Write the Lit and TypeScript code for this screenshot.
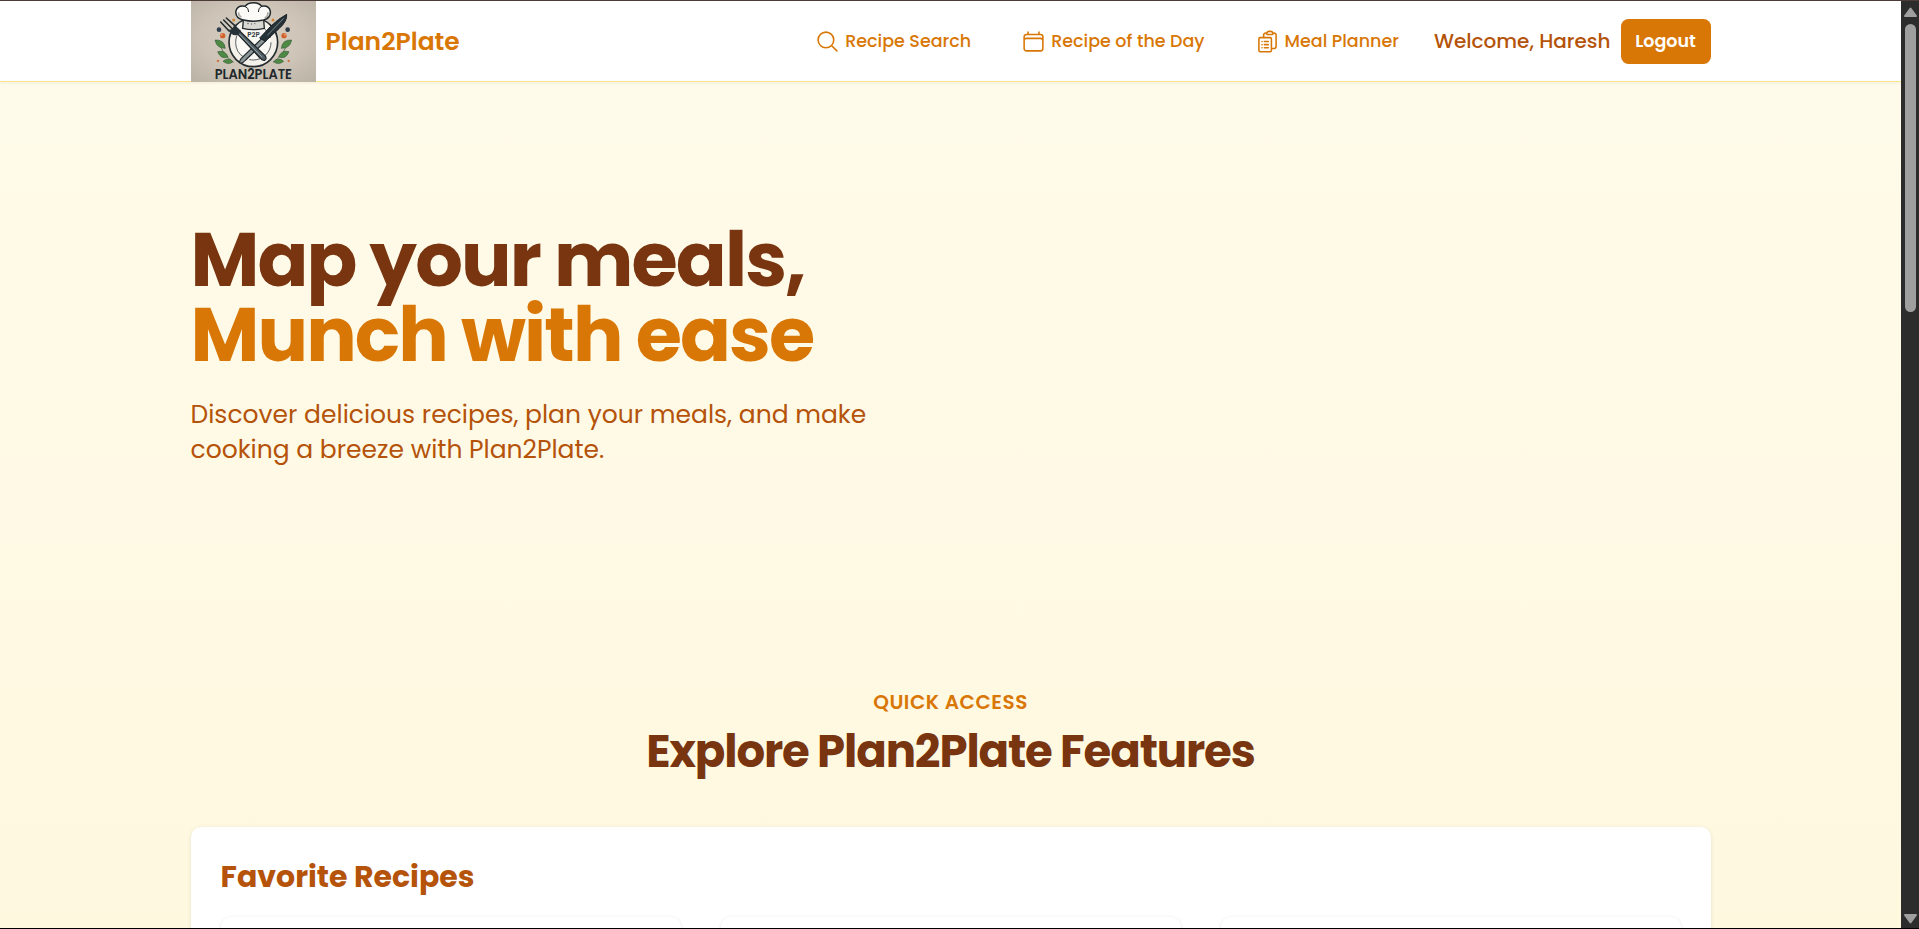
import { LitElement, html, css, svg } from "lit";
import { customElement } from "lit/decorators.js";

const NAV = [
  {
    label: "Recipe Search",
    path: "M21 21l-5.197-5.197m0 0A7.5 7.5 0 105.196 5.196a7.5 7.5 0 0010.607 10.607z",
  },
  {
    label: "Recipe of the Day",
    path: "M6.75 3v2.25M17.25 3v2.25M3 18.75V7.5a2.25 2.25 0 012.25-2.25h13.5A2.25 2.25 0 0121 7.5v11.25m-18 0A2.25 2.25 0 005.25 21h13.5A2.25 2.25 0 0021 18.75m-18 0v-7.5A2.25 2.25 0 015.25 9h13.5A2.25 2.25 0 0121 11.25v7.5",
  },
  {
    label: "Meal Planner",
    path: "M9 12h3.75M9 15h3.75M9 18h3.75m3 .75H18a2.25 2.25 0 002.25-2.25V6.108c0-1.135-.845-2.098-1.976-2.192a48.424 48.424 0 00-1.123-.08m-5.801 0c-.065.21-.1.433-.1.664 0 .414.336.75.75.75h4.5a.75.75 0 00.75-.75 2.25 2.25 0 00-.1-.664m-5.8 0A2.251 2.251 0 0113.5 2.25H15c1.012 0 1.867.668 2.15 1.586m-5.8 0c-.376.023-.75.05-1.124.08C9.095 4.01 8.25 4.973 8.25 6.108V8.25m0 0H4.875c-.621 0-1.125.504-1.125 1.125v11.25c0 .621.504 1.125 1.125 1.125h9.75c.621 0 1.125-.504 1.125-1.125V9.375c0-.621-.504-1.125-1.125-1.125H8.25zM6.75 12h.008v.008H6.75V12zm0 3h.008v.008H6.75V15zm0 3h.008v.008H6.75V18z",
  },
];

/* One leafy sprig; the other side of the plate is its mirror image. */
const sprig = svg`
  <path d="M85 122Q92 160 128 184" fill="none" stroke="#3c5a3a" stroke-width="2"/>
  <g fill="#4f8a45" stroke="#2b4a30" stroke-width="1.5">
    <path d="M72 117Q100 115 103 142Q77 143 72 117Z"/>
    <path d="M80 152Q103 146 111 168Q89 176 80 152Z"/>
    <path d="M96 181Q112 166 126 182Q112 194 96 181Z"/>
  </g>
  <circle cx="84" cy="86" r="7" fill="#2e3d4c"/>
  <circle cx="95" cy="104" r="8" fill="#d2622c"/>
  <circle cx="92" cy="101" r="3" fill="#eb9a6c"/>
  <circle cx="128" cy="57" r="4.5" fill="#d08435"/>
  <circle cx="81" cy="180" r="3.5" fill="#d0703a"/>`;

@customElement("plate-logo")
export class PlateLogo extends LitElement {
  static styles = css`
    :host { display: block; width: 125px; height: 81px; }
    svg { display: block; width: 100%; height: 100%; }
    .word { font: 600 41px Poppins, Lato, sans-serif; fill: #20282c; }
    .mono { font: 600 18px Poppins, Lato, sans-serif; fill: #343a3d; }
  `;
  render() {
    return html`<svg viewBox="0 0 375 243" preserveAspectRatio="none">
      <defs>
        <radialGradient id="bg" cx="50%" cy="45%" r="70%">
          <stop offset="0" stop-color="#d9d1c4" />
          <stop offset="0.6" stop-color="#cdc4b7" />
          <stop offset="1" stop-color="#bdb4a8" />
        </radialGradient>
      </defs>
      <rect width="375" height="243" fill="url(#bg)" />
      <circle cx="187" cy="124" r="73" fill="#f4f1eb" stroke="#262d30" stroke-width="5" />
      <circle cx="187" cy="124" r="53" fill="#fbf9f5" stroke="#3b4144" stroke-width="2.5" stroke-dasharray="95 16" />
      ${sprig}
      <g transform="translate(374 0) scale(-1 1)">${sprig}</g>
      <text class="mono" x="169" y="108" textLength="37" lengthAdjust="spacingAndGlyphs">P2P</text>
      <g transform="translate(0 2)">
        <path d="M157 54L155 80Q187 88 220 80L218 54Z" fill="#d9d7d2" stroke="#22292c" stroke-width="4" />
        <path d="M157 55Q131 49 135 27Q141 10 162 14Q170 3 187 3Q205 3 212 14Q234 10 238 29Q240 49 218 55Q187 62 157 55Z"
          fill="#fbfaf7" stroke="#22292c" stroke-width="4.5" />
        <path d="M162 14Q173 18 173 31M212 14Q202 18 202 31" fill="none" stroke="#22292c" stroke-width="3" />
        <path d="M221 49Q233 43 230 32M151 46Q141 41 143 32" fill="none" stroke="#aaa9a5" stroke-width="5" />
        <path d="M169 66h4M180 67h3M190 66h3" stroke="#4c5153" stroke-width="3" />
      </g>
      <path d="M213 112L151 172Q142 184 148 186Q156 187 164 177L225 119Z" fill="#8c9696" stroke="#20282c" stroke-width="3.5" />
      <path d="M287 40Q289 61 264 83L223 121L206 111L239 76Q262 53 287 40Z" fill="#263238" stroke="#192125" stroke-width="3" />
      <path d="M278 52L229 103" stroke="#77868a" stroke-width="3" />
      <path d="M136 95L144 88L222 164Q229 174 221 178Q213 179 207 171Z" fill="#536167" stroke="#182024" stroke-width="3.5" />
      <path d="M145 99L213 168" stroke="#98a4a7" stroke-width="3" />
      <g fill="none" stroke="#20282c" stroke-width="4.5" stroke-linecap="round">
        <path d="M89 63L114 90M98 57L124 83M106 51L134 76" />
      </g>
      <path d="M109 85Q128 90 129 70L140 80Q151 88 145 97Q134 108 121 98Z" fill="#263238" />
      <text class="word" x="71" y="233" textLength="232" lengthAdjust="spacingAndGlyphs">PLAN2PLATE</text>
    </svg>`;
  }
}

@customElement("app-root")
export class AppRoot extends LitElement {
  static styles = css`
    * { box-sizing: border-box; margin: 0; }
    :host {
      display: grid;
      grid-template-columns: minmax(0, 1fr) 18px;
      position: relative;
      height: 929px;
      overflow: hidden;
      font-family: Poppins, "Open Sans", sans-serif;
      color: #78350f;
    }
    .edge-top, .edge-bottom { position: absolute; left: 0; right: 0; height: 1px; }
    .edge-top { top: 0; background: #4b3c38; }
    .edge-bottom { bottom: 0; background: #000; }
    .page {
      height: 929px;
      overflow: hidden;
      background: linear-gradient(#fffbeb, #fef3c7) 0 0 / 100% 2870px no-repeat;
    }
    .wrap { width: 1520px; margin: 0 auto; }
    header {
      padding-top: 1px;
      height: 82px;
      background: #fff;
      border-bottom: 1px solid #fde68a;
      box-shadow: 0 1px 3px rgba(0, 0, 0, 0.06);
    }
    .bar { display: flex; align-items: center; height: 80px; }
    .brand { display: flex; align-items: center; gap: 10px; margin-right: auto; height: 80px; }
    plate-logo { align-self: flex-start; }
    .name { font-size: 25px; line-height: 35px; font-weight: 600; color: #d97706; }
    nav { display: flex; gap: 50px; margin-right: 35px; }
    .link {
      display: flex; align-items: center; gap: 5px;
      font-size: 17.5px; line-height: 25px; font-weight: 500; color: #d97706;
    }
    .link svg { width: 25px; height: 25px; fill: none; stroke: currentColor; stroke-width: 1.5; stroke-linecap: round; stroke-linejoin: round; }
    .hello { margin-right: 10px; font-size: 20px; line-height: 30px; font-weight: 500; color: #b45309; }
    button {
      width: 90px; height: 45px; padding: 0; border: 0; border-radius: 7.5px; background: #d97706; color: #fff;
      font: 600 17.5px/25px Poppins, "Open Sans", sans-serif;
    }
    .hero { padding-top: 140px; height: 604.5px; }
    h1 { font-size: 75px; line-height: 75px; font-weight: 700; letter-spacing: -0.025em; }
    h1 span { display: block; }
    .accent { color: #d97706; }
    .lead { margin-top: 25px; width: 710px; font-size: 25px; line-height: 35px; color: #b45309; }
    .intro { text-align: center; }
    .eyebrow { font-size: 20px; line-height: 30px; font-weight: 600; letter-spacing: 0.025em; color: #d97706; }
    h2 { margin-top: 10px; font-size: 45px; line-height: 50px; font-weight: 700; letter-spacing: -0.025em; }
    .card {
      margin-top: 50px; padding: 30px; height: 600px; border-radius: 10px; background: #fff;
      box-shadow: 0 1px 4px rgba(0, 0, 0, 0.1);
    }
    h3 { font-size: 30px; line-height: 40px; font-weight: 700; color: #b45309; }
    .recipes { display: grid; grid-template-columns: repeat(3, 1fr); gap: 40px; margin-top: 20px; }
    .recipe { height: 400px; border-radius: 10px; background: #fff; box-shadow: 0 1px 4px rgba(0, 0, 0, 0.1); }
    .scroll {
      display: flex; flex-direction: column; align-items: center;
      padding: 7px 0 5px 1px; height: 929px; background: #2c2c2c;
    }
    .scroll svg { display: block; width: 13px; height: 10px; fill: #9f9f9f; stroke: #9f9f9f; stroke-width: 2; stroke-linejoin: round; }
    .thumb { width: 11px; height: 288px; margin: 7px 0 auto; border-radius: 6px; background: #9f9f9f; }
  `;

  render() {
    return html`
      <div class="page">
        <header>
          <div class="wrap bar">
            <div class="brand"><plate-logo></plate-logo><span class="name">Plan2Plate</span></div>
            <nav>
              ${NAV.map(
                (n) => html`<a class="link"><svg viewBox="0 0 24 24"><path d=${n.path} /></svg><span>${n.label}</span></a>`
              )}
            </nav>
            <span class="hello">Welcome, Haresh</span>
            <button>Logout</button>
          </div>
        </header>
        <main class="wrap">
          <section class="hero">
            <h1><span>Map your meals,</span><span class="accent">Munch with ease</span></h1>
            <p class="lead">Discover delicious recipes, plan your meals, and make cooking a breeze with Plan2Plate.</p>
          </section>
          <section>
            <div class="intro">
              <p class="eyebrow">QUICK ACCESS</p>
              <h2>Explore Plan2Plate Features</h2>
            </div>
            <div class="card">
              <h3>Favorite Recipes</h3>
              <div class="recipes">
                <div class="recipe"></div><div class="recipe"></div><div class="recipe"></div>
              </div>
            </div>
          </section>
        </main>
      </div>
      <div class="scroll">
        <svg viewBox="0 0 13 10"><path d="M6.5 1.5L12 9H1Z" /></svg>
        <div class="thumb"></div>
        <svg viewBox="0 0 13 10"><path d="M1 1H12L6.5 8.5Z" /></svg>
      </div>
      <div class="edge-top"></div>
      <div class="edge-bottom"></div>
    `;
  }
}
